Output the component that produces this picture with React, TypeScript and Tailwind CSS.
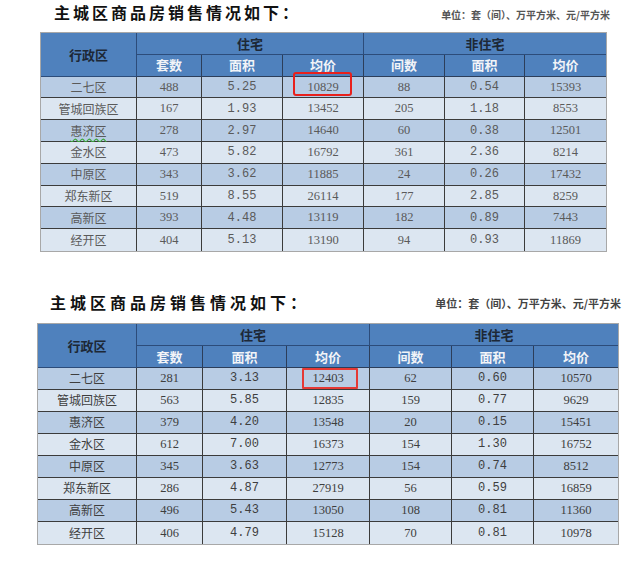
import React from 'react';

type Row = [string, string, string, string, string, string, string];

const table1: Row[] = [
    ['二七区', '488', '5.25', '10829', '88', '0.54', '15393'],
    ['管城回族区', '167', '1.93', '13452', '205', '1.18', '8553'],
    ['惠济区', '278', '2.97', '14640', '60', '0.38', '12501'],
    ['金水区', '473', '5.82', '16792', '361', '2.36', '8214'],
    ['中原区', '343', '3.62', '11885', '24', '0.26', '17432'],
    ['郑东新区', '519', '8.55', '26114', '177', '2.85', '8259'],
    ['高新区', '393', '4.48', '13119', '182', '0.89', '7443'],
    ['经开区', '404', '5.13', '13190', '94', '0.93', '11869'],
];

const table2: Row[] = [
    ['二七区', '281', '3.13', '12403', '62', '0.60', '10570'],
    ['管城回族区', '563', '5.85', '12835', '159', '0.77', '9629'],
    ['惠济区', '379', '4.20', '13548', '20', '0.15', '15451'],
    ['金水区', '612', '7.00', '16373', '154', '1.30', '16752'],
    ['中原区', '345', '3.63', '12773', '154', '0.74', '8512'],
    ['郑东新区', '286', '4.87', '27919', '56', '0.59', '16859'],
    ['高新区', '496', '5.43', '13050', '108', '0.81', '11360'],
    ['经开区', '406', '4.79', '15128', '70', '0.81', '10978'],
];

const subHeads = ['套数', '面积', '均价', '间数', '面积', '均价'];

const cjk = 'font-["Noto_Sans_CJK_SC",sans-serif]';

interface TableProps {
    rows: Row[];
    cols: string;
    rowH: string;
    textColor: string;
    markBox: string;
    spellCheck?: boolean;
}

const SalesTable: React.FC<TableProps> = ({ rows, cols, rowH, textColor, markBox, spellCheck }) => {
    return (
        <div className="border border-[#a8a8a8]">
            <div className={`grid ${cols}`}>
                {/* header */}
                <div className={`row-span-2 flex items-center justify-center bg-[#4f81bd] border-r border-b border-[#2c4c7a] text-[13px] font-bold text-[#1d2836] ${cjk}`}>
                    行政区
                </div>
                <div className={`col-span-3 ${rowH} flex items-center justify-center bg-[#4f81bd] border-r border-b border-[#2c4c7a] text-[13px] font-bold text-[#1d2836] ${cjk}`}>
                    住宅
                </div>
                <div className={`col-span-3 ${rowH} flex items-center justify-center bg-[#4f81bd] border-b border-[#2c4c7a] text-[13px] font-bold text-[#1d2836] ${cjk}`}>
                    非住宅
                </div>
                {subHeads.map((h, i) => (
                    <div
                        key={i}
                        className={`${rowH} flex items-center justify-center bg-[#4f81bd] border-b border-[#2c3e5a] ${i < 5 ? 'border-r' : ''} text-[13px] font-bold text-[#f2f4f8] ${cjk}`}
                    >
                        {h}
                    </div>
                ))}

                {/* body */}
                {rows.map((r, ri) =>
                    r.map((v, ci) => {
                        const bg = ri % 2 === 0 ? 'bg-[#b8cce4]' : 'bg-[#dce6f1]';
                        const br = ci < 6 ? 'border-r' : '';
                        const bb = ri < rows.length - 1 ? 'border-b' : '';
                        let font = 'font-["Liberation_Serif",serif] text-[12.5px]';
                        if (ci === 0) font = `${cjk} text-[12px]`;
                        if (ci === 2 || ci === 5) font = 'font-["Liberation_Mono",monospace] text-[12px]';
                        return (
                            <div
                                key={`${ri}-${ci}`}
                                className={`relative ${rowH} flex items-center justify-center ${bg} ${br} ${bb} border-[#3b3b3b] ${font} ${textColor}`}
                            >
                                {ci === 0 && spellCheck && v === '惠济区' ? (
                                    <span className="underline decoration-wavy decoration-[#3aa63a] underline-offset-2">{v}</span>
                                ) : (
                                    v
                                )}
                                {ri === 0 && ci === 3 && <div className={markBox} />}
                            </div>
                        );
                    })
                )}
            </div>
        </div>
    );
};

const App: React.FC = () => {
    return (
        <div className="w-[641px] h-[561px] bg-white overflow-hidden">
            {/* first screenshot */}
            <section className="ml-[40px] w-[570px]">
                <div className="h-[32px] flex justify-between items-start">
                    <h2 className={`ml-[14px] mt-[1px] leading-[22px] text-[16px] font-bold tracking-[3px] text-[#111] ${cjk}`}>
                        主城区商品房销售情况如下：
                    </h2>
                    <span className={`mt-[8px] leading-[14px] text-[10px] font-bold text-[#555] ${cjk}`}>
                        单位：套（间）、万平方米、元/平方米
                    </span>
                </div>
                <div className="w-[567px]">
                    <SalesTable
                        rows={table1}
                        cols="grid-cols-[96px_65px_81px_81px_81px_80px_81px]"
                        rowH="h-[21.8px]"
                        textColor="text-[#5a5a5a]"
                        markBox="absolute left-[10px] right-[11px] top-[-5px] bottom-[1px] border-2 border-[#e8201c] rounded-[3px]"
                        spellCheck
                    />
                </div>
            </section>

            {/* second screenshot */}
            <section className="ml-[37px] mt-[38px] w-[584px]">
                <div className="h-[33px] flex justify-between items-start">
                    <h2 className={`ml-[13px] mt-[1px] leading-[22px] text-[16px] font-bold tracking-[4px] text-[#111] ${cjk}`}>
                        主城区商品房销售情况如下：
                    </h2>
                    <span className={`mt-[6px] leading-[14px] text-[11px] font-bold text-[#444] ${cjk}`}>
                        单位：套（间）、万平方米、元/平方米
                    </span>
                </div>
                <div className="w-[582px]">
                    <SalesTable
                        rows={table2}
                        cols="grid-cols-[99px_66px_84px_83px_82px_82px_84px]"
                        rowH="h-[22px]"
                        textColor="text-[#3e3e3e]"
                        markBox="absolute left-[15px] right-[11px] top-0 bottom-0 border-2 border-[#e53935] rounded-[1px]"
                    />
                </div>
            </section>
        </div>
    );
};

export default App;
